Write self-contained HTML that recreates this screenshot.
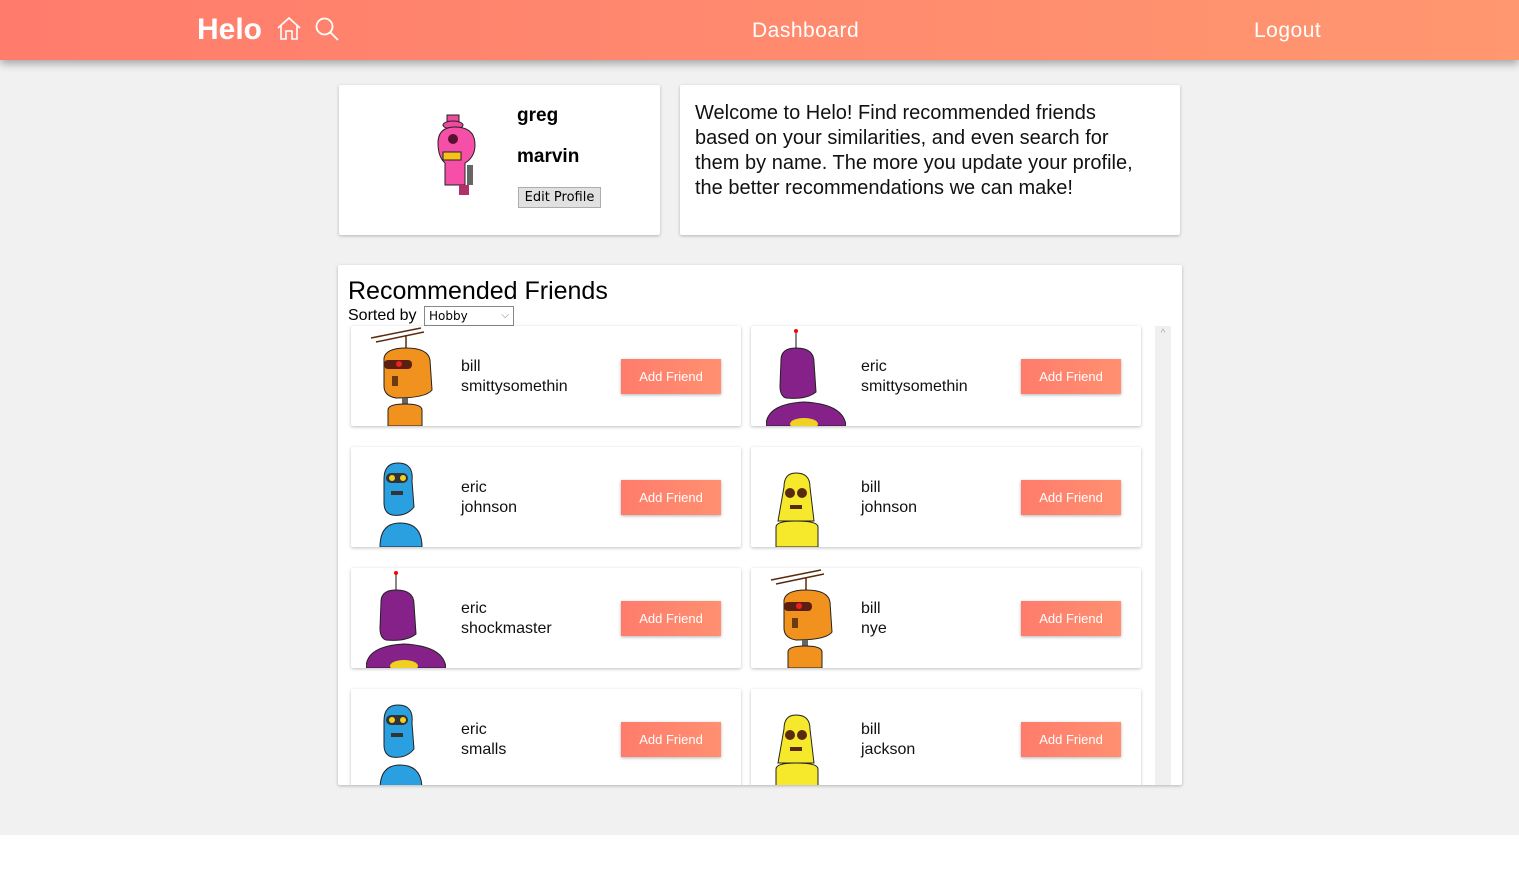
<!DOCTYPE html>
<html><head><meta charset="utf-8"><style>
*{box-sizing:border-box}
body{margin:0;width:1519px;height:886px;background:#fff;font-family:"Liberation Sans",sans-serif;position:relative;overflow:hidden}
.bg{position:absolute;left:0;top:0;width:1519px;height:835px;background:#f1f1f1}
.hdr{position:absolute;left:0;top:0;width:1519px;height:60px;background:linear-gradient(90deg,#ff7c6c,#ff9770);box-shadow:0 4px 8px rgba(0,0,0,.3);color:#fff}
.hdr .logo{position:absolute;left:197px;top:13px;font-size:30px;font-weight:bold}
.hdr .t{position:absolute;top:19px;font-size:21px;letter-spacing:.5px}
.card{position:absolute;background:#fff;box-shadow:0 1px 3px rgba(0,0,0,.25);border-radius:2px}
.btn{position:absolute;left:270px;top:33px;width:100px;height:35px;background:linear-gradient(90deg,#ff7c6c,#ff9070);color:#fff;font-size:13px;text-align:center;line-height:35px;box-shadow:0 1px 3px rgba(0,0,0,.3)}
.nm{position:absolute;left:110px;top:31px;font-size:16px;line-height:20px;color:#111}
.rb{position:absolute;left:15px;top:0}
</style></head><body>
<div class="bg"></div>
<div class="hdr">
<div class="logo">Helo</div>
<svg style="position:absolute;left:276px;top:16px" width="26" height="25" viewBox="0 0 26 25" fill="none" stroke="#fff" stroke-width="1.6"><path d="M2 12 L13 2 L24 12 M5 10 V23 H10 V15 H16 V23 H21 V10"/></svg>
<svg style="position:absolute;left:314px;top:16px" width="26" height="26" viewBox="0 0 26 26" fill="none" stroke="#fff" stroke-width="1.8"><circle cx="10.5" cy="10.5" r="8"/><path d="M16.5 16.5 L24 24"/></svg>
<div class="t" style="left:752px">Dashboard</div>
<div class="t" style="left:1254px">Logout</div>
</div>

<div class="card" style="left:339px;top:85px;width:321px;height:150px">
<svg style="position:absolute;left:96px;top:28px" width="46" height="84" viewBox="0 0 46 84"><rect x="12" y="2" width="12" height="8" fill="#f04aa0" stroke="#222"/><ellipse cx="18" cy="12" rx="10" ry="4" fill="#f04aa0" stroke="#222"/><path d="M3 30 Q3 14 20 14 Q40 14 40 32 Q40 44 30 50 V72 H10 V50 Q3 44 3 30Z" fill="#f54fa8" stroke="#222"/><circle cx="18" cy="26" r="5" fill="#5a1030"/><rect x="8" y="39" width="18" height="8" fill="#f6c31a" stroke="#222"/><rect x="24" y="72" width="10" height="10" fill="#b0306a"/><rect x="32" y="52" width="6" height="20" fill="#666"/></svg>
<div style="position:absolute;left:178px;top:20px;font-size:19px;font-weight:bold">greg</div>
<div style="position:absolute;left:178px;top:61px;font-size:19px;font-weight:bold">marvin</div>
<div style="position:absolute;left:179px;top:102px;width:83px;height:21px;background:#e1e1e1;border:1px solid #adadad;font-size:13px;text-align:center;line-height:19px;font-family:'DejaVu Sans',sans-serif">Edit Profile</div>
</div>

<div class="card" style="left:680px;top:85px;width:500px;height:150px">
<div style="position:absolute;left:15px;top:16px;width:460px;font-size:20px;line-height:25px;color:#111">Welcome to Helo! Find recommended friends based on your similarities, and even search for them by name. The more you update your profile, the better recommendations we can make!</div>
</div>

<div class="card" style="left:338px;top:265px;width:844px;height:520px;overflow:hidden">
<div style="position:absolute;left:10px;top:12px;font-size:25px">Recommended Friends</div>
<div style="position:absolute;left:10px;top:42px;font-size:16px">Sorted by</div>
<div style="position:absolute;left:86px;top:41px;width:90px;height:20px;border:1px solid #888;font-size:12px;line-height:19px;padding-left:4px;font-family:'DejaVu Sans',sans-serif">Hobby<span style="position:absolute;right:4px;top:-1px;color:#777;font-size:10px">⌵</span></div>
<div style="position:absolute;left:817px;top:61px;width:16px;height:459px;background:#f0f0f0"><div style="color:#aaa;font-size:10px;text-align:center;margin-top:2px">^</div></div>

<div class="card" style="left:13px;top:61px;width:390px;height:100px;overflow:hidden">
<svg class="rb" width="80" height="100" viewBox="0 0 80 100"><path d="M5 12 L55 2 M10 16 L58 6 M40 10 V26" stroke="#5a2a10" stroke-width="1.5"/><path d="M18 32 Q20 22 40 22 Q62 22 64 34 L66 64 Q60 72 30 72 Q18 70 18 60Z" fill="#f2921e" stroke="#222"/><rect x="18" y="34" width="28" height="9" rx="4" fill="#5a1f10"/><circle cx="33" cy="38" r="3" fill="#f02020"/><rect x="26" y="50" width="6" height="10" fill="#6a3a10"/><rect x="36" y="72" width="6" height="10" fill="#666"/><path d="M22 84 Q22 78 39 78 Q56 78 56 84 V100 H22Z" fill="#f2921e" stroke="#222"/></svg>
<div class="nm">bill<br>smittysomethin</div><div class="btn">Add Friend</div></div>
<div class="card" style="left:413px;top:61px;width:390px;height:100px;overflow:hidden">
<svg class="rb" width="80" height="100" viewBox="0 0 80 100"><circle cx="30" cy="5" r="2" fill="red"/><path d="M30 7 V24" stroke="#888" stroke-width="2"/><path d="M15 34 Q15 22 30 22 Q48 22 48 36 L50 66 Q40 74 20 72 Q14 70 14 60Z" fill="#86218a" stroke="#222"/><path d="M0 100 Q0 78 38 76 Q78 78 80 100Z" fill="#86218a" stroke="#222"/><ellipse cx="38" cy="98" rx="14" ry="6" fill="#f0d020"/></svg>
<div class="nm">eric<br>smittysomethin</div><div class="btn">Add Friend</div></div>

<div class="card" style="left:13px;top:182px;width:390px;height:100px;overflow:hidden">
<svg class="rb" width="80" height="100" viewBox="0 0 80 100"><path d="M18 32 Q18 16 32 16 Q48 16 46 34 L48 60 Q40 70 26 68 Q18 66 18 56Z" fill="#2aa0e0" stroke="#222"/><rect x="20" y="26" width="22" height="10" rx="5" fill="#333"/><circle cx="26" cy="31" r="3" fill="#f0d020"/><circle cx="37" cy="31" r="3" fill="#f0d020"/><rect x="25" y="44" width="12" height="4" fill="#333"/><path d="M14 100 Q14 76 34 76 Q56 76 56 100Z" fill="#2aa0e0" stroke="#222"/></svg>
<div class="nm">eric<br>johnson</div><div class="btn">Add Friend</div></div>
<div class="card" style="left:413px;top:182px;width:390px;height:100px;overflow:hidden">
<svg class="rb" width="80" height="100" viewBox="0 0 80 100"><path d="M18 40 Q18 26 30 26 Q44 26 44 40 L48 74 H12Z" fill="#f6e82a" stroke="#222"/><circle cx="24" cy="46" r="5" fill="#5a2a10"/><circle cx="36" cy="46" r="5" fill="#5a2a10"/><rect x="24" y="58" width="12" height="4" fill="#5a2a10"/><path d="M10 100 V80 Q10 74 30 74 Q52 74 52 80 V100Z" fill="#f6e82a" stroke="#222"/></svg>
<div class="nm">bill<br>johnson</div><div class="btn">Add Friend</div></div>

<div class="card" style="left:13px;top:303px;width:390px;height:100px;overflow:hidden">
<svg class="rb" width="80" height="100" viewBox="0 0 80 100"><circle cx="30" cy="5" r="2" fill="red"/><path d="M30 7 V24" stroke="#888" stroke-width="2"/><path d="M15 34 Q15 22 30 22 Q48 22 48 36 L50 66 Q40 74 20 72 Q14 70 14 60Z" fill="#86218a" stroke="#222"/><path d="M0 100 Q0 78 38 76 Q78 78 80 100Z" fill="#86218a" stroke="#222"/><ellipse cx="38" cy="98" rx="14" ry="6" fill="#f0d020"/></svg>
<div class="nm">eric<br>shockmaster</div><div class="btn">Add Friend</div></div>
<div class="card" style="left:413px;top:303px;width:390px;height:100px;overflow:hidden">
<svg class="rb" width="80" height="100" viewBox="0 0 80 100"><path d="M5 12 L55 2 M10 16 L58 6 M40 10 V26" stroke="#5a2a10" stroke-width="1.5"/><path d="M18 32 Q20 22 40 22 Q62 22 64 34 L66 64 Q60 72 30 72 Q18 70 18 60Z" fill="#f2921e" stroke="#222"/><rect x="18" y="34" width="28" height="9" rx="4" fill="#5a1f10"/><circle cx="33" cy="38" r="3" fill="#f02020"/><rect x="26" y="50" width="6" height="10" fill="#6a3a10"/><rect x="36" y="72" width="6" height="10" fill="#666"/><path d="M22 84 Q22 78 39 78 Q56 78 56 84 V100 H22Z" fill="#f2921e" stroke="#222"/></svg>
<div class="nm">bill<br>nye</div><div class="btn">Add Friend</div></div>

<div class="card" style="left:13px;top:424px;width:390px;height:100px;overflow:hidden">
<svg class="rb" width="80" height="100" viewBox="0 0 80 100"><path d="M18 32 Q18 16 32 16 Q48 16 46 34 L48 60 Q40 70 26 68 Q18 66 18 56Z" fill="#2aa0e0" stroke="#222"/><rect x="20" y="26" width="22" height="10" rx="5" fill="#333"/><circle cx="26" cy="31" r="3" fill="#f0d020"/><circle cx="37" cy="31" r="3" fill="#f0d020"/><rect x="25" y="44" width="12" height="4" fill="#333"/><path d="M14 100 Q14 76 34 76 Q56 76 56 100Z" fill="#2aa0e0" stroke="#222"/></svg>
<div class="nm">eric<br>smalls</div><div class="btn">Add Friend</div></div>
<div class="card" style="left:413px;top:424px;width:390px;height:100px;overflow:hidden">
<svg class="rb" width="80" height="100" viewBox="0 0 80 100"><path d="M18 40 Q18 26 30 26 Q44 26 44 40 L48 74 H12Z" fill="#f6e82a" stroke="#222"/><circle cx="24" cy="46" r="5" fill="#5a2a10"/><circle cx="36" cy="46" r="5" fill="#5a2a10"/><rect x="24" y="58" width="12" height="4" fill="#5a2a10"/><path d="M10 100 V80 Q10 74 30 74 Q52 74 52 80 V100Z" fill="#f6e82a" stroke="#222"/></svg>
<div class="nm">bill<br>jackson</div><div class="btn">Add Friend</div></div>
</div>
</body></html>
